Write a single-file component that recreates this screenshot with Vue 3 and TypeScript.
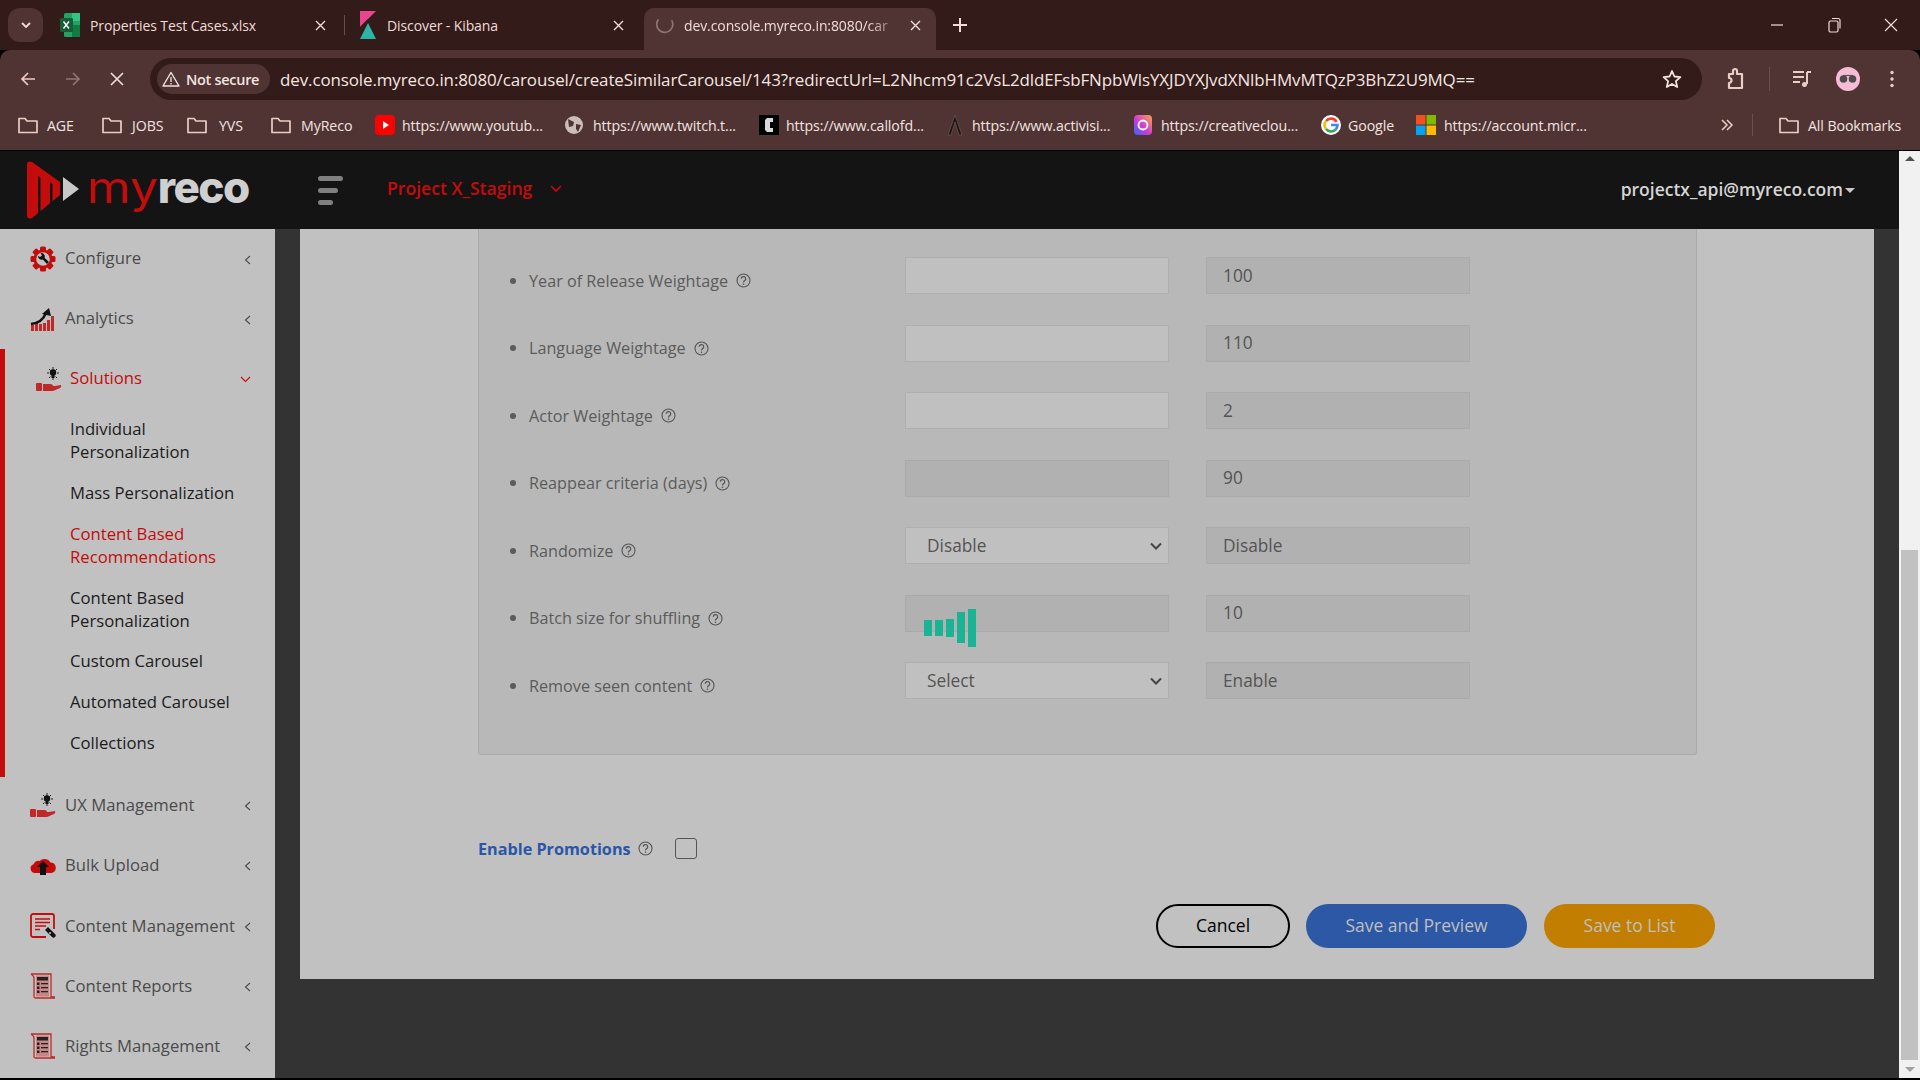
<script setup lang="ts">
interface Row { label: string; kind: 'input' | 'disabled' | 'select' | 'loader'; value?: string; compare: string }
interface Tab { title: string; icon: string; width: number; active?: boolean }
interface Bookmark { label: string; icon: string; width: number; gap: number }
interface MenuItem { label: string; icon: string }

const tabs: Tab[] = [
  { title: 'Properties Test Cases.xlsx', icon: 'excel', width: 292 },
  { title: 'Discover - Kibana', icon: 'kibana', width: 300 },
  { title: 'dev.console.myreco.in:8080/car', icon: 'spin', width: 292, active: true },
]
const bookmarks: Bookmark[] = [
  { label: 'AGE', icon: 'folder', width: 84, gap: 9 },
  { label: 'JOBS', icon: 'folder', width: 85, gap: 10 },
  { label: 'YVS', icon: 'folder', width: 84, gap: 12 },
  { label: 'MyReco', icon: 'folder', width: 104, gap: 10 },
  { label: 'https://www.youtub...', icon: 'yt', width: 190, gap: 7 },
  { label: 'https://www.twitch.t...', icon: 'globe', width: 194, gap: 10 },
  { label: 'https://www.callofd...', icon: 'cod', width: 188, gap: 7 },
  { label: 'https://www.activisi...', icon: 'act', width: 187, gap: 9 },
  { label: 'https://creativeclou...', icon: 'cc', width: 187, gap: 9 },
  { label: 'Google', icon: 'g', width: 95, gap: 7 },
  { label: 'https://account.micr...', icon: 'ms', width: 295, gap: 8 },
]
const menuTop: MenuItem[] = [
  { label: 'Configure', icon: 'gear' },
  { label: 'Analytics', icon: 'chart' },
]
const subItems: { label: string; on?: boolean }[] = [
  { label: 'Individual Personalization' },
  { label: 'Mass Personalization' },
  { label: 'Content Based Recommendations', on: true },
  { label: 'Content Based Personalization' },
  { label: 'Custom Carousel' },
  { label: 'Automated Carousel' },
  { label: 'Collections' },
]
const menuBottom: MenuItem[] = [
  { label: 'UX Management', icon: 'hand' },
  { label: 'Bulk Upload', icon: 'cloud' },
  { label: 'Content Management', icon: 'doc' },
  { label: 'Content Reports', icon: 'scroll' },
  { label: 'Rights Management', icon: 'scroll' },
]
const rows: Row[] = [
  { label: 'Year of Release Weightage', kind: 'input', compare: '100' },
  { label: 'Language Weightage', kind: 'input', compare: '110' },
  { label: 'Actor Weightage', kind: 'input', compare: '2' },
  { label: 'Reappear criteria (days)', kind: 'disabled', compare: '90' },
  { label: 'Randomize', kind: 'select', value: 'Disable', compare: 'Disable' },
  { label: 'Batch size for shuffling', kind: 'loader', compare: '10' },
  { label: 'Remove seen content', kind: 'select', value: 'Select', compare: 'Enable' },
]
const bars = [
  { w: 8, h: 16 }, { w: 8, h: 16 }, { w: 8, h: 18 }, { w: 8, h: 31 }, { w: 8, h: 38 },
]
</script>

<template>
  <div class="screen">
    <!-- browser chrome -->
    <div class="tabstrip">
      <div class="tabmenu">
        <svg width="12" height="12" viewBox="0 0 12 12"><path d="M2 4l4 4 4-4" fill="none" stroke="#f0dcd8" stroke-width="1.8"/></svg>
      </div>
      <div class="tabs">
        <div v-for="t in tabs" :key="t.title" class="tab" :class="{ active: t.active }" :style="{ width: t.width + 'px' }">
          <svg v-if="t.icon === 'excel'" class="favicon" width="22" height="26" viewBox="0 0 22 26">
            <rect x="4" y="1" width="16" height="24" rx="1.5" fill="#21a366"/>
            <rect x="12" y="1" width="8" height="8" fill="#33c481"/>
            <rect x="12" y="13" width="8" height="12" fill="#107c41"/>
            <rect x="0" y="6" width="13" height="14" rx="1" fill="#185c37"/>
            <path d="M3.5 9.5l5.5 7M9 9.5l-5.5 7" stroke="#fff" stroke-width="1.4"/>
          </svg>
          <svg v-else-if="t.icon === 'kibana'" class="favicon kib" width="16" height="28" viewBox="0 0 16 28">
            <path d="M0 0h16L0 16z" fill="#e8478b"/>
            <path d="M0 28L8 12l8 16z" fill="#2bb5a9"/>
            <path d="M0 16L8 8l0 4z" fill="#321b18"/>
          </svg>
          <svg v-else class="favicon spin" width="18" height="18" viewBox="0 0 18 18">
            <path d="M2 4a8 8 0 1 0 14 1" fill="none" stroke="#8f7470" stroke-width="1.7" stroke-linecap="round"/>
          </svg>
          <span class="tabtitle">{{ t.title }}</span>
          <svg class="tabclose" width="11" height="11" viewBox="0 0 11 11"><path d="M1 1l9 9M10 1l-9 9" stroke="#f0dcd8" stroke-width="1.4"/></svg>
        </div>
        <svg class="newtab" width="14" height="14" viewBox="0 0 14 14"><path d="M7 0v14M0 7h14" stroke="#f0dcd8" stroke-width="2"/></svg>
      </div>
      <div class="winctl">
        <svg width="14" height="14" viewBox="0 0 14 14"><path d="M1 7h12" stroke="#f0dcd8" stroke-width="1.2"/></svg>
        <svg width="14" height="16" viewBox="0 0 14 16"><rect x="2" y="4" width="9" height="11" rx="1.5" fill="none" stroke="#f0dcd8" stroke-width="1.2"/><path d="M5 1.500h6a2 2 0 0 1 2 2v8" fill="none" stroke="#f0dcd8" stroke-width="1.2"/></svg>
        <svg width="14" height="14" viewBox="0 0 14 14"><path d="M1 1l12 12M13 1L1 13" stroke="#f0dcd8" stroke-width="1.2"/></svg>
      </div>
    </div>

    <div class="toolbar">
      <div class="navbtns">
        <svg width="16" height="16" viewBox="0 0 16 16"><path d="M15 8H2M8 2L2 8l6 6" fill="none" stroke="#f0c8c2" stroke-width="1.7"/></svg>
        <svg width="16" height="16" viewBox="0 0 16 16"><path d="M1 8h13M8 2l6 6-6 6" fill="none" stroke="#8f7470" stroke-width="1.7"/></svg>
        <svg width="14" height="14" viewBox="0 0 14 14"><path d="M1 1l12 12M13 1L1 13" stroke="#f0dcd8" stroke-width="1.7"/></svg>
      </div>
      <div class="omnibox">
        <div class="chip">
          <svg width="18" height="16" viewBox="0 0 18 16"><path d="M9 1.500L17 15H1z" fill="none" stroke="#f3e4e0" stroke-width="1.4" stroke-linejoin="round"/><path d="M9 6v5M9 12v1.500" stroke="#f3e4e0" stroke-width="1.300"/></svg>
          <span>Not secure</span>
        </div>
        <span class="url">dev.console.myreco.in:8080/carousel/createSimilarCarousel/143?redirectUrl=L2Nhcm91c2VsL2dldEFsbFNpbWlsYXJDYXJvdXNlbHMvMTQzP3BhZ2U9MQ==</span>
        <svg class="star" width="20" height="20" viewBox="0 0 20 20"><path d="M10 2l2.400 5.500 6 .6-4.500 4 1.300 5.900L10 15l-5.200 3 1.300-5.900-4.500-4 6-.6z" fill="none" stroke="#f3e4e0" stroke-width="1.800" stroke-linejoin="round"/></svg>
      </div>
      <div class="tools">
        <svg width="22" height="24" viewBox="0 0 22 24"><path d="M4 7h4V4a2 2 0 0 1 4 0v3h5v14H4v-5a2.500 2.500 0 0 0 0-5z" fill="none" stroke="#eccdc6" stroke-width="2.200" stroke-linejoin="round"/></svg>
        <i class="toolsep"></i>
        <svg width="20" height="20" viewBox="0 0 20 20"><path d="M1 3h11M1 8h11M1 13h7" stroke="#eccdc6" stroke-width="2"/><path d="M15 3v12" stroke="#eccdc6" stroke-width="2"/><path d="M15 3h4" stroke="#eccdc6" stroke-width="2"/><circle cx="12.500" cy="15.500" r="2.500" fill="#eccdc6"/></svg>
        <svg class="avatar" width="24" height="24" viewBox="0 0 24 24"><circle cx="12" cy="12" r="12" fill="#f6bcd6"/><circle cx="7.500" cy="12" r="3.800" fill="#4b4d4c"/><circle cx="16.500" cy="12" r="3.800" fill="#4b4d4c"/><path d="M7 8.500h10" stroke="#555" stroke-width="1.200"/></svg>
        <svg width="6" height="20" viewBox="0 0 6 20"><circle cx="3" cy="3.500" r="1.700" fill="#eccdc6"/><circle cx="3" cy="10" r="1.700" fill="#eccdc6"/><circle cx="3" cy="16.500" r="1.700" fill="#eccdc6"/></svg>
      </div>
    </div>

    <div class="bookmarks">
      <div v-for="b in bookmarks" :key="b.label" class="bm" :style="{ width: b.width + 'px', gap: b.gap + 'px' }">
        <svg v-if="b.icon === 'folder'" width="20" height="18" viewBox="0 0 20 18"><path d="M1 2.500h6l2 2.500h10v11.500H1z" fill="none" stroke="#eccdc6" stroke-width="1.700" stroke-linejoin="round"/></svg>
        <svg v-else-if="b.icon === 'yt'" width="20" height="20" viewBox="0 0 20 20"><rect width="20" height="20" rx="4" fill="#f00"/><path d="M8 6l6 4-6 4z" fill="#fff"/></svg>
        <svg v-else-if="b.icon === 'globe'" width="18" height="18" viewBox="0 0 18 18"><circle cx="9" cy="9" r="9" fill="#cdbdba"/><path d="M3 3l6 3-1 4-4 1zM11 8l5 1-3 7-2-3z" fill="#503433"/></svg>
        <svg v-else-if="b.icon === 'cod'" width="20" height="20" viewBox="0 0 20 20"><rect width="20" height="20" fill="#000"/><path d="M14 3H8L6 5v10l2 2h6v-4h-3V7h3z" fill="#d8d8d8"/></svg>
        <svg v-else-if="b.icon === 'act'" width="16" height="22" viewBox="0 0 16 22"><path d="M8 1L1 21h3l4-13 4 13h3z" fill="#1d1413" stroke="#6f5a57" stroke-width=".7"/></svg>
        <svg v-else-if="b.icon === 'cc'" width="18" height="20" viewBox="0 0 18 20"><defs><linearGradient id="ccg" x1="0" y1="1" x2="1" y2="0"><stop offset="0" stop-color="#2b6bff"/><stop offset=".45" stop-color="#d03ad6"/><stop offset="1" stop-color="#ffa83c"/></linearGradient></defs><rect width="18" height="20" rx="4" fill="url(#ccg)"/><circle cx="9" cy="10" r="4.500" fill="none" stroke="#fff" stroke-width="1.800"/></svg>
        <svg v-else-if="b.icon === 'g'" width="20" height="20" viewBox="0 0 20 20"><circle cx="10" cy="10" r="10" fill="#fff"/><path d="M15.600 6.800A6.500 6.500 0 0 0 5 6" fill="none" stroke="#ea4335" stroke-width="2.600"/><path d="M5 6a6.500 6.500 0 0 0 0 8" fill="none" stroke="#fbbc05" stroke-width="2.600"/><path d="M5 14a6.500 6.500 0 0 0 9.500 .7" fill="none" stroke="#34a853" stroke-width="2.600"/><path d="M14.500 14.700A6.500 6.500 0 0 0 16.500 10H10" fill="none" stroke="#4285f4" stroke-width="2.600"/></svg>
        <svg v-else width="20" height="20" viewBox="0 0 20 20"><rect width="9.500" height="9.500" fill="#f25022"/><rect x="10.500" width="9.500" height="9.500" fill="#7fba00"/><rect y="10.500" width="9.500" height="9.500" fill="#00a4ef"/><rect x="10.500" y="10.500" width="9.500" height="9.500" fill="#ffb900"/></svg>
        <span>{{ b.label }}</span>
      </div>
      <svg class="more" width="14" height="14" viewBox="0 0 14 14"><path d="M2 2l5 5-5 5M7 2l5 5-5 5" fill="none" stroke="#eccdc6" stroke-width="1.500"/></svg>
      <i class="bmsep"></i>
      <div class="bm allbm">
        <svg width="20" height="18" viewBox="0 0 20 18"><path d="M1 2.500h6l2 2.500h10v11.500H1z" fill="none" stroke="#eccdc6" stroke-width="1.700" stroke-linejoin="round"/></svg>
        <span>All Bookmarks</span>
      </div>
    </div>

    <!-- page -->
    <div class="page">
      <div class="app">
        <header class="header">
          <div class="logo">
            <svg width="54" height="60" viewBox="0 0 54 60">
              <path d="M0 5q0-5 5-3l28 20v13L5 58q-5 2-5-3z" fill="#c40c0c"/>
              <path d="M11 16v41h2.500V18zM23 22v27h2.500V24z" fill="#141414"/>
              <path d="M36 17l16 12-16 12z" fill="#c8c8c8"/>
            </svg>
            <span class="logotext"><span class="my">my</span><span class="reco">reco</span></span>
          </div>
          <div class="burger"><i></i><i></i><i></i></div>
          <span class="project">Project X_Staging</span>
          <svg class="projchev" width="12" height="8" viewBox="0 0 12 8"><path d="M1 1l5 5 5-5" fill="none" stroke="#c40c0c" stroke-width="1.600"/></svg>
          <span class="user">projectx_api@myreco.com</span>
          <i class="caret"></i>
        </header>

        <div class="body">
          <aside class="side">
            <div v-for="m in menuTop" :key="m.label" class="mrow upper">
              <svg v-if="m.icon === 'gear'" class="micon" width="26" height="26" viewBox="0 0 26 26">
                <circle cx="13" cy="13" r="9.500" fill="#c40c0c"/>
                <g fill="#c40c0c"><rect x="10" y="0.500" width="6" height="25" rx="1.500"/><rect x="10" y="0.500" width="6" height="25" rx="1.500" transform="rotate(45 13 13)"/><rect x="10" y="0.500" width="6" height="25" rx="1.500" transform="rotate(90 13 13)"/><rect x="10" y="0.500" width="6" height="25" rx="1.500" transform="rotate(135 13 13)"/></g>
                <circle cx="13" cy="13" r="6.800" fill="#c1c1c1"/>
                <path d="M8 10a3.500 3.500 0 0 0 4.800 3.500L17 18l2-2-4.500-4.200A3.500 3.500 0 0 0 10.500 7L12 9.500l-2 1.500z" fill="#111"/>
              </svg>
              <svg v-else class="micon" width="26" height="26" viewBox="0 0 26 26">
                <g fill="#c0282a"><rect x="1" y="19" width="3" height="6"/><rect x="5" y="17" width="3" height="8"/><rect x="9" y="18" width="3" height="7"/><rect x="13" y="17" width="3" height="8"/><rect x="17" y="14" width="3" height="11"/><rect x="21" y="10" width="3" height="15"/></g>
                <path d="M1 18q11-1 15-11" fill="none" stroke="#111" stroke-width="2.500"/>
                <path d="M12 8l7-6 2 8z" fill="#111"/>
              </svg>
              <span class="mlabel">{{ m.label }}</span>
              <svg class="mchev" width="7" height="10" viewBox="0 0 7 10"><path d="M6 1L1.500 5 6 9" fill="none" stroke="#4b4b4b" stroke-width="1.100"/></svg>
            </div>

            <div class="solutions">
              <div class="solhead">
                <svg class="micon" width="26" height="24" viewBox="0 0 26 24">
                  <g stroke="#111" stroke-width=".9"><path d="M17 0v3M17 11v2M11 6h2M21 6h2M13 2l1.500 1.500M21 2l-1.500 1.500M13 11l1.500-1.500M21 11l-1.500-1.500"/></g>
                  <circle cx="17" cy="5.500" r="3.200" fill="#111"/><rect x="15.500" y="8" width="3" height="3" fill="#111"/>
                  <rect x="0" y="16" width="6" height="8" rx="1" fill="#c0282a"/>
                  <path d="M7 17h7q3 0 3 2h-5 7l6-1q1 2-1 3l-7 3H7z" fill="#c0282a"/>
                </svg>
                <span class="mlabel on">Solutions</span>
                <svg class="solchev" width="11" height="7" viewBox="0 0 11 7"><path d="M1 1l4.500 4.500L10 1" fill="none" stroke="#c40c0c" stroke-width="1.100"/></svg>
              </div>
              <ul class="sublist">
                <li v-for="s in subItems" :key="s.label" :class="{ on: s.on }">{{ s.label }}</li>
              </ul>
            </div>

            <div v-for="m in menuBottom" :key="m.label" class="mrow lower">
              <svg v-if="m.icon === 'hand'" class="micon" width="26" height="24" viewBox="0 0 26 24">
                <g stroke="#111" stroke-width=".9"><path d="M17 0v3M17 11v2M11 6h2M21 6h2M13 2l1.500 1.500M21 2l-1.500 1.500M13 11l1.500-1.500M21 11l-1.500-1.500"/></g>
                <circle cx="17" cy="5.500" r="3.200" fill="#111"/><rect x="15.500" y="8" width="3" height="3" fill="#111"/>
                <rect x="0" y="16" width="6" height="8" rx="1" fill="#c0282a"/>
                <path d="M7 17h7q3 0 3 2h-5 7l6-1q1 2-1 3l-7 3H7z" fill="#c0282a"/>
              </svg>
              <svg v-else-if="m.icon === 'cloud'" class="micon" width="26" height="20" viewBox="0 0 26 20">
                <path d="M5 18a4.500 4.500 0 0 1-1.500-8.700 5 5 0 0 1 6-3.300A7 7 0 0 1 20.500 7.500a5.300 5.300 0 0 1 1 10.500z" fill="#c40c0c"/>
                <path d="M13 6l6 6h-3v8h-6v-8H7z" fill="#111"/>
              </svg>
              <svg v-else-if="m.icon === 'doc'" class="micon" width="26" height="26" viewBox="0 0 26 26">
                <path d="M16 24H3a2 2 0 0 1-2-2V3a2 2 0 0 1 2-2h19a2 2 0 0 1 2 2v13" fill="none" stroke="#c40c0c" stroke-width="1.800"/>
                <path d="M5 6h15M5 9.500h15M5 13h11M5 16.500h5" stroke="#c40c0c" stroke-width="1.400"/>
                <path d="M15 17l3-3 7 7a2 2 0 0 1-3 3z" fill="#111"/>
                <circle cx="20" cy="20" r="1" fill="#c1c1c1"/>
              </svg>
              <svg v-else class="micon" width="26" height="26" viewBox="0 0 26 26">
                <path d="M1 1h20v23h4M1 1q3 2 3 4v19a2 2 0 0 0 2 1h19" fill="none" stroke="#c0282a" stroke-width="1.300"/>
                <rect x="6" y="2.500" width="13" height="21" fill="#c78686"/>
                <rect x="7" y="4" width="11" height="3.500" fill="#222"/>
                <g fill="#222"><rect x="7" y="9.500" width="2.500" height="2.500"/><rect x="7" y="13.500" width="2.500" height="2.500"/><rect x="7" y="17.500" width="2.500" height="2.500"/><rect x="11" y="10" width="7" height="1.300"/><rect x="11" y="14" width="7" height="1.300"/><rect x="11" y="18" width="7" height="1.300"/></g>
              </svg>
              <span class="mlabel">{{ m.label }}</span>
              <svg class="mchev" width="7" height="10" viewBox="0 0 7 10"><path d="M6 1L1.500 5 6 9" fill="none" stroke="#4b4b4b" stroke-width="1.100"/></svg>
            </div>
          </aside>

          <main class="main">
            <section class="panel">
              <div class="box">
                <div v-for="r in rows" :key="r.label" class="frow">
                  <div class="flabel">
                    <i class="dot"></i>
                    <span>{{ r.label }}</span>
                    <svg class="help" width="15" height="15" viewBox="0 0 15 15"><circle cx="7.500" cy="7.500" r="6.500" fill="none" stroke="#555" stroke-width="1.100"/><path d="M5.300 5.800a2.200 2.200 0 1 1 3.400 1.800c-.8.500-1.200.9-1.200 1.900" fill="none" stroke="#555" stroke-width="1.200"/><circle cx="7.500" cy="11.200" r=".8" fill="#555"/></svg>
                  </div>
                  <div class="cell">
                    <template v-if="r.kind === 'select'">
                      <select class="ctl sel"><option>{{ r.value }}</option></select>
                      <svg class="selchev" width="12" height="8" viewBox="0 0 12 8"><path d="M1 1.500l5 5 5-5" fill="none" stroke="#444" stroke-width="2"/></svg>
                    </template>
                    <input v-else class="ctl" :class="{ off: r.kind !== 'input' }" type="text" :disabled="r.kind !== 'input'" />
                    <div v-if="r.kind === 'loader'" class="loader">
                      <i v-for="(b, i) in bars" :key="i" :style="{ width: b.w + 'px', height: b.h + 'px' }"></i>
                    </div>
                  </div>
                  <input class="ctl off val" type="text" :value="r.compare" disabled />
                </div>
              </div>

              <div class="promo">
                <span class="promolabel">Enable Promotions</span>
                <svg class="help" width="15" height="15" viewBox="0 0 15 15"><circle cx="7.500" cy="7.500" r="6.500" fill="none" stroke="#555" stroke-width="1.100"/><path d="M5.300 5.800a2.200 2.200 0 1 1 3.400 1.800c-.8.500-1.200.9-1.200 1.900" fill="none" stroke="#555" stroke-width="1.200"/><circle cx="7.500" cy="11.200" r=".8" fill="#555"/></svg>
                <span class="check"></span>
              </div>

              <div class="actions">
                <button class="btn cancel" type="button">Cancel</button>
                <button class="btn preview" type="button">Save and Preview</button>
                <button class="btn list" type="button">Save to List</button>
              </div>
            </section>
          </main>
        </div>
      </div>

      <div class="scrollbar">
        <i class="arrow up"></i>
        <div class="thumb"></div>
        <i class="arrow down"></i>
      </div>
    </div>
    <div class="edge"></div>
  </div>
</template>

<style>
html, body { margin: 0; background: #000; overflow: hidden; }
</style>

<style scoped>
.screen { width: 1920px; height: 1080px; display: flex; flex-direction: column; overflow: hidden; font-family: "Open Sans", "Noto Sans", sans-serif; }
svg { display: block; flex: none; }

/* tab strip */
.tabstrip { height: 50px; flex: none; background: #321b18; display: flex; align-items: flex-end; position: relative; color: #f0dcd8; font-size: 14px; }
.tabmenu { width: 35px; height: 34px; margin: 0 0 8px 8px; background: #503433; border-radius: 12px; display: flex; align-items: center; justify-content: center; flex: none; }
.tabs { display: flex; align-items: flex-end; height: 42px; margin-left: 9px; flex: 1; }
.tab { height: 42px; display: flex; align-items: center; padding: 0 18px 8px 8px; box-sizing: border-box; position: relative; border-radius: 10px 10px 0 0; flex: none; }
.tab + .tab { padding-left: 16px; padding-right: 20px; }
.tab + .tab::before { content: ""; position: absolute; left: 0; top: 7px; height: 20px; width: 1px; background: #6a4f4c; }
.tab.active { background: #503433; padding-left: 12px; padding-right: 15px; }
.tab.active::before { display: none; }
.favicon { margin-right: 8px; }
.kib { margin-right: 11px; }
.spin { margin-right: 10px; }
.tabtitle { flex: 1; min-width: 0; white-space: nowrap; letter-spacing: -.1px; }
.active .tabtitle { -webkit-mask-image: linear-gradient(90deg, #000 84%, rgba(0,0,0,.25) 97%); mask-image: linear-gradient(90deg, #000 84%, rgba(0,0,0,.25) 97%); }
.tabclose { margin-left: 8px; }
.newtab { margin: 0 0 18px 17px; }
.winctl { position: absolute; right: 22px; top: 17px; display: flex; gap: 43px; align-items: center; }

/* toolbar */
.toolbar { height: 50px; flex: none; background: #503433; border-radius: 10px 10px 0 0; display: flex; align-items: center; position: relative; padding-top: 8px; box-sizing: border-box; }
.navbtns { width: 150px; display: flex; align-items: center; padding-left: 20px; gap: 29px; box-sizing: border-box; flex: none; }
.omnibox { width: 1552px; height: 42px; background: #321b18; border-radius: 21px; display: flex; align-items: center; padding: 0 20px 0 7px; box-sizing: border-box; flex: none; }
.chip { height: 30px; width: 113px; border-radius: 15px; background: #503433; display: flex; align-items: center; gap: 6px; padding-left: 5px; box-sizing: border-box; color: #f3e4e0; font-size: 14.500px; font-weight: 600; letter-spacing: -.3px; flex: none; white-space: nowrap; }
.url { margin-left: 10px; flex: 1; color: #f6e6e2; font-size: 16.950px; white-space: nowrap; overflow: hidden; letter-spacing: -.1px; }
.star { margin-left: 6px; }
.tools { display: flex; align-items: center; margin-left: 23px; }
.toolsep { width: 1px; height: 24px; background: #6a4f4c; margin: 0 22px 0 22px; }
.avatar { margin: 0 29px 0 24px; }

/* bookmarks */
.bookmarks { height: 50px; flex: none; background: #503433; display: flex; align-items: center; padding: 0 0 0 18px; box-sizing: border-box; color: #f3e4e0; font-size: 14.200px; position: relative; }
.bm { display: flex; align-items: center; white-space: nowrap; flex: none; letter-spacing: -.1px; }
.more { margin-left: 9px; flex: none; }
.bmsep { width: 1px; height: 22px; background: #6a4f4c; margin: 0 26px 0 18px; flex: none; }
.allbm { gap: 9px; }

/* page */
.page { flex: 1; min-height: 0; display: flex; margin-top: 1px; background: #141414; }
.app { flex: 1; min-width: 0; display: flex; flex-direction: column; }
.header { height: 78px; background: #141414; display: flex; align-items: center; flex: none; position: relative; }
.logo { display: flex; align-items: center; width: 318px; padding-left: 27px; box-sizing: border-box; flex: none; }
.logotext { margin-left: 6px; font-family: "Inter", sans-serif; font-size: 44px; line-height: 1; margin-top: -6px; white-space: nowrap; }
.my { display: inline-block; color: #c40c0c; font-weight: 400; transform: scaleX(1.14); transform-origin: left center; margin-right: 8px; }
.reco { color: #cfcfcf; font-weight: 800; letter-spacing: -1.500px; }
.burger { width: 25px; display: flex; flex-direction: column; gap: 7px; flex: none; }
.burger i { display: block; height: 5px; background: #808080; border-radius: 3px; }
.burger i:nth-child(2) { width: 20px; }
.burger i:nth-child(3) { width: 15px; }
.project { margin-left: 44px; color: #c40c0c; font-weight: 600; font-size: 17.600px; margin-top: -4px; }
.projchev { margin-left: 18px; margin-top: -3px; }
.user { margin-left: auto; color: #d4d4d4; font-weight: 600; font-size: 17.500px; margin-top: -2px; }
.caret { width: 0; height: 0; border: 5px solid transparent; border-top-color: #c8c8c8; border-bottom: 0; margin: 1px 44px 0 2px; }

.body { flex: 1; min-height: 0; display: flex; }
.side { width: 275px; flex: none; background: #c1c1c1; font-size: 16.700px; color: #4b4b4b; }
.mrow { height: 60px; display: flex; align-items: center; padding-left: 30px; position: relative; box-sizing: border-box; }
.mrow.lower { height: 60.250px; top: -2px; }
.micon { width: 26px; margin-right: 9px; }
.mlabel { white-space: nowrap; margin-top: -1px; }
.upper .mlabel { margin-top: -3px; }
.mlabel.on { color: #c40c0c; margin-top: -3px; }
.mchev { position: absolute; left: 244px; top: 26px; }
.solutions { border-left: 5px solid #c40c0c; height: 428px; box-sizing: border-box; }
.solhead { height: 60px; display: flex; align-items: center; padding-left: 31px; position: relative; }
.solhead .micon { margin-right: 8px; }
.solchev { position: absolute; left: 235px; top: 27px; }
.sublist { list-style: none; margin: -.6px 0 0; padding: 0 0 0 65px; color: #1c1c1c; line-height: 23px; }
.sublist li { padding: 8.900px 0; width: 190px; }
.sublist li.on { color: #c40c0c; }

.main { flex: 1; min-width: 0; background: #333; padding-left: 25px; padding-right: 25px; overflow: hidden; }
.panel { background: #c1c1c1; padding: 0 159px 31px 178px; height: 750px; box-sizing: border-box; }
.box { height: 526px; width: 1219px; background: #b8b8b8; border: 1px solid #aaa; border-top: 0; border-radius: 0 0 3px 3px; box-sizing: border-box; padding-top: 28px; }
.frow { height: 67.500px; display: grid; grid-template-columns: 426px 301px 264px; align-items: start; }
.flabel { display: flex; align-items: center; height: 24px; margin-top: 11.500px; padding-left: 31px; color: #5b5b5b; font-size: 16.200px; white-space: nowrap; }
.dot { width: 6px; height: 6px; border-radius: 50%; background: #5b5b5b; margin-right: 13px; }
.help { margin-left: 8px; }
.cell { position: relative; height: 37px; }
.ctl { display: block; box-sizing: border-box; width: 264px; height: 37px; margin: 0; border: 1px solid #afafaf; background: #c0c0c0; color: #545454; font: 17.300px "Open Sans", sans-serif; padding: 0 16px 1px; border-radius: 0; outline: 0; }
.ctl.off { background: #b1b1b1; border-color: #aaa; }
.ctl.val { -webkit-text-fill-color: #545454; opacity: 1; }
.sel { appearance: none; padding: 0 0 1px 21px; }
.selchev { position: absolute; left: 245px; top: 15px; pointer-events: none; }
.loader { position: absolute; left: 19px; top: 33px; height: 0; display: flex; align-items: center; gap: 3px; }
.loader i { display: block; background: #1ab394; flex: none; }

.promo { display: flex; align-items: center; height: 21px; margin-top: 83px; }
.promolabel { color: #2a56a8; font-weight: 700; font-size: 16.200px; }
.promo .help { margin-left: 7px; }
.check { width: 22px; height: 21px; box-sizing: border-box; border: 1.500px solid #555; border-radius: 3px; margin-left: 22px; }

.actions { display: flex; justify-content: flex-end; gap: 16px; margin-top: 45px; }
.btn { height: 44px; border-radius: 22px; border: 0; font: 17.500px "Open Sans", sans-serif; padding: 0 0 2px; }
.cancel { width: 134px; border: 2px solid #000; background: transparent; color: #000; }
.preview { width: 221px; background: #2c58a6; color: #bfbfbf; }
.list { width: 171px; background: #c17e00; color: #bfbfbf; margin-left: 1px; }

.scrollbar { width: 21px; flex: none; background: #f1f1f1; position: relative; }
.arrow { position: absolute; left: 6px; width: 0; height: 0; border: 5px solid transparent; }
.arrow.up { top: 5px; border-bottom-color: #505050; border-top: 0; }
.arrow.down { bottom: 6px; border-top-color: #a0a0a0; border-bottom: 0; }
.thumb { position: absolute; left: 2px; right: 2px; top: 399px; height: 510px; background: #c1c1c1; }
.edge { height: 2px; flex: none; background: #000; }
</style>
